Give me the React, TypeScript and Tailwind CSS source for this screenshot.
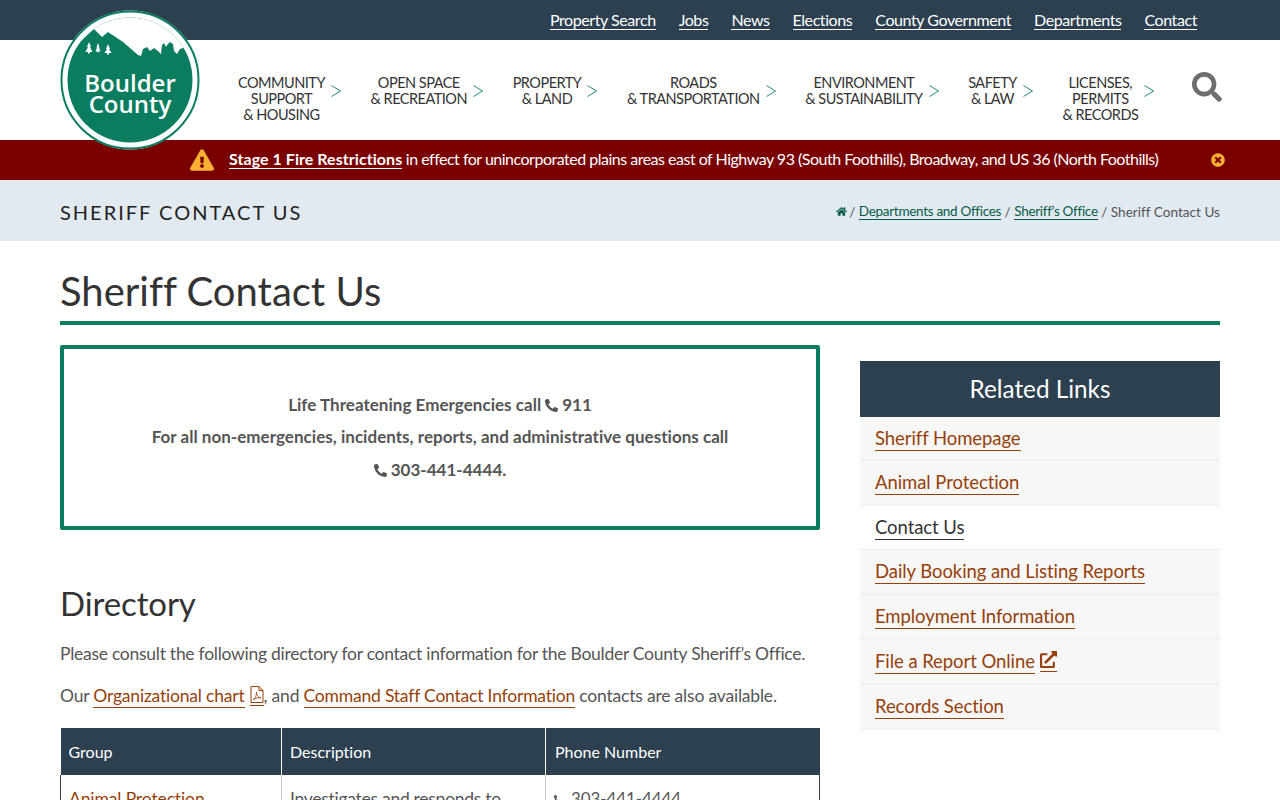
import React from 'react';
import {
  FaExclamationTriangle,
  FaExternalLinkAlt,
  FaHome,
  FaPhoneAlt,
  FaSearch,
  FaTimesCircle,
} from 'react-icons/fa';

const topLinks = ['Property Search', 'Jobs', 'News', 'Elections', 'County Government', 'Departments', 'Contact'];

const navItems = [
  ['COMMUNITY', 'SUPPORT', '& HOUSING'],
  ['OPEN SPACE', '& RECREATION'],
  ['PROPERTY', '& LAND'],
  ['ROADS', '& TRANSPORTATION'],
  ['ENVIRONMENT', '& SUSTAINABILITY'],
  ['SAFETY', '& LAW'],
  ['LICENSES,', 'PERMITS', '& RECORDS'],
];

const relatedLinks = [
  { label: 'Sheriff Homepage', height: 'h-[44px]' },
  { label: 'Animal Protection', height: 'h-[45px]' },
  { label: 'Contact Us', height: 'h-[44px]' },
  { label: 'Daily Booking and Listing Reports', height: 'h-[45px]' },
  { label: 'Employment Information', height: 'h-[44px]' },
  { label: 'File a Report Online', height: 'h-[46px]' },
  { label: 'Records Section', height: 'h-[45px]' },
];

const Logo: React.FC = () => (
  <svg viewBox="0 0 140 140" className="absolute left-[60px] top-[10px] z-20 h-[140px] w-[140px]">
    <defs>
      <clipPath id="inner">
        <circle cx="70" cy="70" r="62.5" />
      </clipPath>
    </defs>
    <circle cx="70" cy="70" r="69.5" fill="#fff" />
    <circle cx="70" cy="70" r="68.5" fill="none" stroke="#0a7d60" strokeWidth="2" />
    <circle cx="70" cy="70" r="62.5" fill="#0a7d60" />
    <g clipPath="url(#inner)">
      <path
        fill="#fff"
        d="M0 0H140V62L132 50 128 41 126 36 123 38 120 39 117 44 114 41 113 34 110 32 107 35 106 37 104 33 102 35 101 44 98 41 94 38 90 41 87 37 83 39 81 46 78 45 63 32 48 22 42 27 34 19 22 30 0 52Z"
      />
    </g>
    <path
      fill="#fff"
      d="M29 32l2 5h-1l2.500 5h-2.500v1.500h-2v-1.500h-2.500l2.500-5h-1zM38 33l1.500 4.500h-0.500l1.500 4h-2v1h-1v-1h-2l1.500-4h-0.500zM48 34l2 5h-1l2.500 4h-2.500v1.500h-2v-1.500h-2.500l2.500-4h-1z"
    />
    <text x="70" y="81.500" textAnchor="middle" fill="#fff" fontSize="24" fontWeight="600" className="font-['Open_Sans',sans-serif]">
      Boulder
    </text>
    <text x="70" y="103" textAnchor="middle" fill="#fff" fontSize="24" fontWeight="600" className="font-['Open_Sans',sans-serif]">
      County
    </text>
  </svg>
);

const PdfIcon: React.FC = () => (
  <svg viewBox="0 0 14 17" className="h-[17px] w-[14px]" fill="none" stroke="currentColor" strokeWidth="1">
    <path d="M1 .500H9L13 4.500V16.500H1Z" />
    <path d="M9 .500V4.500H13" />
    <path d="M3 14C5 13 7 8 6.500 6 6 8 8.500 12 11 12 9 11 5 12 3 14Z" strokeWidth="0.800" />
  </svg>
);

const Header: React.FC = () => (
  <header className="relative">
    <Logo />
    <div className="flex h-10 items-center justify-end gap-[23px] bg-[#2d4050] pr-[83px]">
      {topLinks.map((link) => (
        <a key={link} className="border-b border-white text-base leading-[19px] tracking-[-0.42px] text-white">
          {link}
        </a>
      ))}
    </div>
    <nav className="flex h-[100px] items-start pl-[238px] pr-[58px] pt-[35px]">
      <div className="flex items-start gap-[29.600px]">
        {navItems.map((lines) => (
          <div key={lines[0]} className="flex items-start gap-[6px]">
            <div className="text-center text-[14.500px] leading-4 tracking-[-0.5px] text-[#333]">
              {lines.map((line) => (
                <div key={line} className="whitespace-nowrap">
                  {line}
                </div>
              ))}
            </div>
            <svg viewBox="0 0 10 12" className="mt-[10px] h-[12px] w-[10px]" fill="none" stroke="#0a7d60" strokeWidth="0.900">
              <path d="M0.500 0.500L9.500 6 0.500 11.500" />
            </svg>
          </div>
        ))}
      </div>
      <div className="ml-auto mt-[-3px] h-[30px] w-[30px] overflow-hidden">
        <FaSearch className="h-[30px] w-[30px] text-[#6e6e6e]" />
      </div>
    </nav>
  </header>
);

const AlertBar: React.FC = () => (
  <div className="flex h-10 items-center bg-[#7a0000] pl-[190px] pr-[55px] text-base text-white">
    <FaExclamationTriangle className="h-[24px] w-[24px] text-[#fbb034]" />
    <p className="mb-[2px] ml-[15px] whitespace-nowrap tracking-[-0.5px]">
      <a className="border-b border-white font-bold tracking-[0.05px]">Stage 1 Fire Restrictions</a> in effect for
      unincorporated plains areas east of Highway 93 (South Foothills), Broadway, and US 36 (North Foothills)
    </p>
    <FaTimesCircle className="ml-auto h-[14px] w-[14px] text-[#fbb034]" />
  </div>
);

const TitleBar: React.FC = () => (
  <div className="flex h-[61px] items-center justify-between bg-[#e1e9f1] px-[60px] pt-[2px]">
    <div className="text-xl tracking-[2px] text-[#222]">SHERIFF CONTACT US</div>
    <div className="mt-px flex items-center text-[13.600px] text-[#555]">
      <FaHome className="mr-[2px] h-[11px] w-[11px] text-[#075c47]" />
      <span>/&nbsp;</span>
      <a className="border-b border-[#075c47] text-[13.500px] leading-4 tracking-[-0.3px] text-[#075c47]">
        Departments and Offices
      </a>
      <span>&nbsp;/&nbsp;</span>
      <a className="border-b border-[#075c47] text-[13.500px] leading-4 tracking-[-0.3px] text-[#075c47]">
        Sheriff’s Office
      </a>
      <span>&nbsp;/ Sheriff Contact Us</span>
    </div>
  </div>
);

const ContactBox: React.FC = () => (
  <div className="flex h-[185px] flex-col items-center justify-center rounded-[2px] border-4 border-[#0a7d60] text-[17px] font-bold leading-[32.500px] tracking-[0.03px] text-[#555]">
    <p className="flex items-center gap-[4px]">
      Life Threatening Emergencies call <FaPhoneAlt className="h-[13px] w-[13px]" /> 911
    </p>
    <p>For all non-emergencies, incidents, reports, and administrative questions call</p>
    <p className="flex items-center gap-[4px]">
      <FaPhoneAlt className="h-[13px] w-[13px]" /> 303-441-4444.
    </p>
  </div>
);

const DirectoryTable: React.FC = () => (
  <table className="mt-[18px] w-[760px] table-fixed border-collapse text-base">
    <thead>
      <tr className="h-[47px] bg-[#2d4050] text-left text-white">
        <th className="w-[221px] border-r border-white pl-[8px] font-normal">Group</th>
        <th className="w-[264px] border-r border-white pl-[8px] font-normal">Description</th>
        <th className="pl-[9px] font-normal">Phone Number</th>
      </tr>
    </thead>
    <tbody>
      <tr className="align-top text-[17.500px] leading-6 text-[#555]">
        <td className="border-l border-r border-l-[#2d4050] border-r-[#ccc] pl-[8px] pt-[12px] tracking-[-0.12px]">
          <a className="border-b border-[#963f0a] text-[#963f0a]">Animal Protection</a>
        </td>
        <td className="border-r border-[#ccc] px-[8px] pt-[12px] tracking-[-0.28px]">
          Investigates and responds to animal complaints and welfare concerns
        </td>
        <td className="border-r border-[#2d4050] pl-[8px] pt-[12px] text-[17px] tracking-[-0.1px]">
          <span className="flex items-center gap-[9px]">
            <FaPhoneAlt className="h-[12px] w-[8px]" /> 303-441-4444
          </span>
        </td>
      </tr>
    </tbody>
  </table>
);

const Sidebar: React.FC = () => (
  <aside className="mt-[16px] w-[360px]">
    <h2 className="flex h-[56px] items-center justify-center bg-[#2d4050] text-[24.300px] text-white">Related Links</h2>
    <ul>
      {relatedLinks.map(({ label, height }) => {
        const current = label === 'Contact Us';
        const external = label === 'File a Report Online';
        const color = current ? 'border-[#333] text-[#333]' : 'border-[#963f0a] text-[#963f0a]';
        return (
          <li
            key={label}
            className={`flex items-center border-b border-[#eee] pl-[15px] text-[18.500px] tracking-[-0.07px] ${height} ${current ? 'bg-white' : 'bg-[#f7f7f7]'}`}
          >
            <a className={`border-b leading-[23px] ${color}`}>{label}</a>
            {external && (
              <span className="ml-[5px] border-b border-[#963f0a] pb-[3px] text-[#963f0a]">
                <FaExternalLinkAlt className="h-[17px] w-[17px]" />
              </span>
            )}
          </li>
        );
      })}
    </ul>
  </aside>
);

const App: React.FC = () => {
  return (
    <div className="h-screen overflow-hidden bg-white font-['Lato',sans-serif] [font-variant-ligatures:none]">
      <Header />
      <AlertBar />
      <TitleBar />
      <main className="px-[60px]">
        <h1 className="border-b-4 border-[#0a7d60] pb-[4px] pt-[25px] text-[40px] leading-[51px] text-[#333]">
          Sheriff Contact Us
        </h1>
        <div className="mt-[20px] flex justify-between">
          <div className="w-[760px]">
            <ContactBox />
            <h2 className="mt-[52px] text-[33px] leading-[42px] tracking-[-0.1px] text-[#333]">Directory</h2>
            <p className="mt-[16px] whitespace-nowrap text-[17.500px] leading-7 tracking-[-0.27px] text-[#555]">
              Please consult the following directory for contact information for the Boulder County Sheriff’s Office.
            </p>
            <p className="mt-[14px] flex items-center whitespace-nowrap text-[17.500px] leading-7 tracking-[-0.2px] text-[#555]">
              Our&nbsp;
              <a className="border-b border-[#963f0a] leading-[22px] text-[#963f0a]">Organizational chart</a>
              <span className="ml-[5px] border-b border-[#963f0a] pb-[2px] text-[#963f0a]">
                <PdfIcon />
              </span>
              ,&nbsp;and&nbsp;
              <a className="border-b border-[#963f0a] leading-[22px] text-[#963f0a]">
                Command Staff Contact Information
              </a>
              &nbsp;contacts are also available.
            </p>
            <DirectoryTable />
          </div>
          <Sidebar />
        </div>
      </main>
    </div>
  );
};

export default App;
